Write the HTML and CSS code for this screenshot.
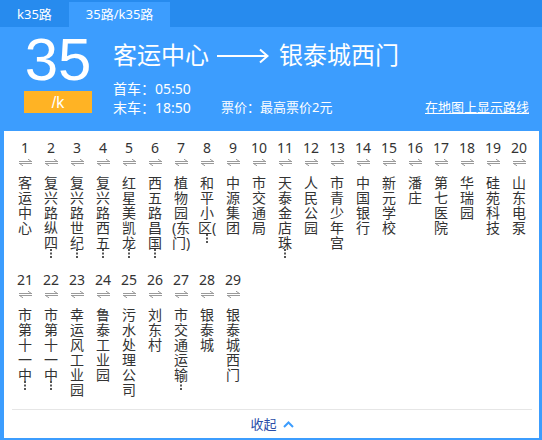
FILE: index.html
```html
<!DOCTYPE html>
<html lang="zh-CN">
<head>
<meta charset="utf-8">
<title>35路/k35路</title>
<link rel="stylesheet" href="styles.css">
</head>
<body>
<div class="tabs">
  <div class="tab">k35路</div>
  <div class="tab active">35路/k35路</div>
</div>
<div class="header">
  <div class="badge">
    <div class="num">35</div>
    <div class="sub">/k</div>
  </div>
  <div class="info">
    <div class="title">
      <span>客运中心</span>
      <svg class="arrow" width="52" height="16" viewBox="0 0 52 16"><path d="M0 8H50" stroke="#fff" stroke-width="2" fill="none"/><path d="M43 1.5L50.5 8L43 14.5" stroke="#fff" stroke-width="2" fill="none"/></svg>
      <span>银泰城西门</span>
    </div>
    <div class="meta">
      <div class="times">
        <div>首车<span class="colon">：</span>05:50</div>
        <div>末车<span class="colon">：</span>18:50</div>
      </div>
      <div class="price">票价<span class="colon">：</span>最高票价2元</div>
      <a class="maplink" href="#">在地图上显示路线</a>
    </div>
  </div>
</div>
<div class="panel">
  <div class="stops">
    <div class="stop"><div class="no">1</div><svg class="swap" viewBox="0 0 13 7"><path d="M0 2.5H13M12.5 2.5L9 0.2M0 4.5H13M0.5 4.5L4 6.8" stroke="#9a9a9a" stroke-width="1" fill="none"/></svg><div class="name">客运中心</div></div>
    <div class="stop"><div class="no">2</div><svg class="swap" viewBox="0 0 13 7"><path d="M0 2.5H13M12.5 2.5L9 0.2M0 4.5H13M0.5 4.5L4 6.8" stroke="#9a9a9a" stroke-width="1" fill="none"/></svg><div class="name">复兴路纵四</div><div class="more"></div></div>
    <div class="stop"><div class="no">3</div><svg class="swap" viewBox="0 0 13 7"><path d="M0 2.5H13M12.5 2.5L9 0.2M0 4.5H13M0.5 4.5L4 6.8" stroke="#9a9a9a" stroke-width="1" fill="none"/></svg><div class="name">复兴路世纪</div><div class="more"></div></div>
    <div class="stop"><div class="no">4</div><svg class="swap" viewBox="0 0 13 7"><path d="M0 2.5H13M12.5 2.5L9 0.2M0 4.5H13M0.5 4.5L4 6.8" stroke="#9a9a9a" stroke-width="1" fill="none"/></svg><div class="name">复兴路西五</div><div class="more"></div></div>
    <div class="stop"><div class="no">5</div><svg class="swap" viewBox="0 0 13 7"><path d="M0 2.5H13M12.5 2.5L9 0.2M0 4.5H13M0.5 4.5L4 6.8" stroke="#9a9a9a" stroke-width="1" fill="none"/></svg><div class="name">红星美凯龙</div><div class="more"></div></div>
    <div class="stop"><div class="no">6</div><svg class="swap" viewBox="0 0 13 7"><path d="M0 2.5H13M12.5 2.5L9 0.2M0 4.5H13M0.5 4.5L4 6.8" stroke="#9a9a9a" stroke-width="1" fill="none"/></svg><div class="name">西五路昌国</div><div class="more"></div></div>
    <div class="stop"><div class="no">7</div><svg class="swap" viewBox="0 0 13 7"><path d="M0 2.5H13M12.5 2.5L9 0.2M0 4.5H13M0.5 4.5L4 6.8" stroke="#9a9a9a" stroke-width="1" fill="none"/></svg><div class="name">植物园(东门)</div></div>
    <div class="stop"><div class="no">8</div><svg class="swap" viewBox="0 0 13 7"><path d="M0 2.5H13M12.5 2.5L9 0.2M0 4.5H13M0.5 4.5L4 6.8" stroke="#9a9a9a" stroke-width="1" fill="none"/></svg><div class="name">和平小区(</div><div class="more"></div></div>
    <div class="stop"><div class="no">9</div><svg class="swap" viewBox="0 0 13 7"><path d="M0 2.5H13M12.5 2.5L9 0.2M0 4.5H13M0.5 4.5L4 6.8" stroke="#9a9a9a" stroke-width="1" fill="none"/></svg><div class="name">中源集团</div></div>
    <div class="stop"><div class="no">10</div><svg class="swap" viewBox="0 0 13 7"><path d="M0 2.5H13M12.5 2.5L9 0.2M0 4.5H13M0.5 4.5L4 6.8" stroke="#9a9a9a" stroke-width="1" fill="none"/></svg><div class="name">市交通局</div></div>
    <div class="stop"><div class="no">11</div><svg class="swap" viewBox="0 0 13 7"><path d="M0 2.5H13M12.5 2.5L9 0.2M0 4.5H13M0.5 4.5L4 6.8" stroke="#9a9a9a" stroke-width="1" fill="none"/></svg><div class="name">天泰金店珠</div><div class="more"></div></div>
    <div class="stop"><div class="no">12</div><svg class="swap" viewBox="0 0 13 7"><path d="M0 2.5H13M12.5 2.5L9 0.2M0 4.5H13M0.5 4.5L4 6.8" stroke="#9a9a9a" stroke-width="1" fill="none"/></svg><div class="name">人民公园</div></div>
    <div class="stop"><div class="no">13</div><svg class="swap" viewBox="0 0 13 7"><path d="M0 2.5H13M12.5 2.5L9 0.2M0 4.5H13M0.5 4.5L4 6.8" stroke="#9a9a9a" stroke-width="1" fill="none"/></svg><div class="name">市青少年宫</div></div>
    <div class="stop"><div class="no">14</div><svg class="swap" viewBox="0 0 13 7"><path d="M0 2.5H13M12.5 2.5L9 0.2M0 4.5H13M0.5 4.5L4 6.8" stroke="#9a9a9a" stroke-width="1" fill="none"/></svg><div class="name">中国银行</div></div>
    <div class="stop"><div class="no">15</div><svg class="swap" viewBox="0 0 13 7"><path d="M0 2.5H13M12.5 2.5L9 0.2M0 4.5H13M0.5 4.5L4 6.8" stroke="#9a9a9a" stroke-width="1" fill="none"/></svg><div class="name">新元学校</div></div>
    <div class="stop"><div class="no">16</div><svg class="swap" viewBox="0 0 13 7"><path d="M0 2.5H13M12.5 2.5L9 0.2M0 4.5H13M0.5 4.5L4 6.8" stroke="#9a9a9a" stroke-width="1" fill="none"/></svg><div class="name">潘庄</div></div>
    <div class="stop"><div class="no">17</div><svg class="swap" viewBox="0 0 13 7"><path d="M0 2.5H13M12.5 2.5L9 0.2M0 4.5H13M0.5 4.5L4 6.8" stroke="#9a9a9a" stroke-width="1" fill="none"/></svg><div class="name">第七医院</div></div>
    <div class="stop"><div class="no">18</div><svg class="swap" viewBox="0 0 13 7"><path d="M0 2.5H13M12.5 2.5L9 0.2M0 4.5H13M0.5 4.5L4 6.8" stroke="#9a9a9a" stroke-width="1" fill="none"/></svg><div class="name">华瑞园</div></div>
    <div class="stop"><div class="no">19</div><svg class="swap" viewBox="0 0 13 7"><path d="M0 2.5H13M12.5 2.5L9 0.2M0 4.5H13M0.5 4.5L4 6.8" stroke="#9a9a9a" stroke-width="1" fill="none"/></svg><div class="name">硅苑科技</div></div>
    <div class="stop"><div class="no">20</div><svg class="swap" viewBox="0 0 13 7"><path d="M0 2.5H13M12.5 2.5L9 0.2M0 4.5H13M0.5 4.5L4 6.8" stroke="#9a9a9a" stroke-width="1" fill="none"/></svg><div class="name">山东电泵</div></div>
    <div class="stop"><div class="no">21</div><svg class="swap" viewBox="0 0 13 7"><path d="M0 2.5H13M12.5 2.5L9 0.2M0 4.5H13M0.5 4.5L4 6.8" stroke="#9a9a9a" stroke-width="1" fill="none"/></svg><div class="name">市第十一中</div><div class="more"></div></div>
    <div class="stop"><div class="no">22</div><svg class="swap" viewBox="0 0 13 7"><path d="M0 2.5H13M12.5 2.5L9 0.2M0 4.5H13M0.5 4.5L4 6.8" stroke="#9a9a9a" stroke-width="1" fill="none"/></svg><div class="name">市第十一中</div><div class="more"></div></div>
    <div class="stop"><div class="no">23</div><svg class="swap" viewBox="0 0 13 7"><path d="M0 2.5H13M12.5 2.5L9 0.2M0 4.5H13M0.5 4.5L4 6.8" stroke="#9a9a9a" stroke-width="1" fill="none"/></svg><div class="name">幸运风工业园</div></div>
    <div class="stop"><div class="no">24</div><svg class="swap" viewBox="0 0 13 7"><path d="M0 2.5H13M12.5 2.5L9 0.2M0 4.5H13M0.5 4.5L4 6.8" stroke="#9a9a9a" stroke-width="1" fill="none"/></svg><div class="name">鲁泰工业园</div></div>
    <div class="stop"><div class="no">25</div><svg class="swap" viewBox="0 0 13 7"><path d="M0 2.5H13M12.5 2.5L9 0.2M0 4.5H13M0.5 4.5L4 6.8" stroke="#9a9a9a" stroke-width="1" fill="none"/></svg><div class="name">污水处理公司</div></div>
    <div class="stop"><div class="no">26</div><svg class="swap" viewBox="0 0 13 7"><path d="M0 2.5H13M12.5 2.5L9 0.2M0 4.5H13M0.5 4.5L4 6.8" stroke="#9a9a9a" stroke-width="1" fill="none"/></svg><div class="name">刘东村</div></div>
    <div class="stop"><div class="no">27</div><svg class="swap" viewBox="0 0 13 7"><path d="M0 2.5H13M12.5 2.5L9 0.2M0 4.5H13M0.5 4.5L4 6.8" stroke="#9a9a9a" stroke-width="1" fill="none"/></svg><div class="name">市交通运输</div><div class="more"></div></div>
    <div class="stop"><div class="no">28</div><svg class="swap" viewBox="0 0 13 7"><path d="M0 2.5H13M12.5 2.5L9 0.2M0 4.5H13M0.5 4.5L4 6.8" stroke="#9a9a9a" stroke-width="1" fill="none"/></svg><div class="name">银泰城</div></div>
    <div class="stop"><div class="no">29</div><svg class="swap" viewBox="0 0 13 7"><path d="M0 2.5H13M12.5 2.5L9 0.2M0 4.5H13M0.5 4.5L4 6.8" stroke="#9a9a9a" stroke-width="1" fill="none"/></svg><div class="name">银泰城西门</div></div>
  </div>
  <div class="footer">
    <span class="collapse">收起</span>
    <svg class="chev" width="11" height="7" viewBox="0 0 11 7"><path d="M1 6L5.5 1.5L10 6" stroke="#3c9dfe" stroke-width="2" fill="none"/></svg>
  </div>
</div>
</body>
</html>
```

FILE: styles.css
```css
html, body {
  margin: 0;
  padding: 0;
  background: #fff;
}
body {
  width: 542px;
  height: 440px;
  font-family: "Noto Sans", "Noto Sans CJK SC", sans-serif;
  color: #333;
  overflow: hidden;
}
.tabs {
  display: flex;
  height: 27px;
  background: #278bee;
}
.tab {
  margin-top: 2px;
  height: 25px;
  line-height: 25px;
  padding: 0 17px;
  font-size: 13px;
  color: #fff;
}
.tab.active {
  background: #3c9dfe;
}
.header {
  display: flex;
  height: 104px;
  background: #3c9dfe;
  padding: 0 13px 0 24px;
  color: #fff;
}
.badge {
  width: 68px;
  display: flex;
  flex-direction: column;
}
.num {
  font-family: "Liberation Sans", Arial, sans-serif;
  font-size: 60px;
  line-height: 62px;
  height: 62px;
  padding-top: 2px;
  text-align: center;
}
.sub {
  height: 21px;
  padding-top: 1px;
  line-height: 21px;
  background: #ffb324;
  text-align: center;
  font-family: "Liberation Sans", Arial, sans-serif;
  font-size: 16px;
}
.info {
  flex: 1;
  margin-left: 21px;
  display: flex;
  flex-direction: column;
}
.title {
  margin-top: 12px;
  height: 32px;
  line-height: 32px;
  font-size: 24px;
  display: flex;
  align-items: center;
  white-space: nowrap;
}
.arrow {
  margin: 1px 10px 0 8px;
}
.meta {
  margin-top: 8px;
  display: flex;
  align-items: flex-end;
}
.times {
  width: 108px;
  font-size: 14px;
  line-height: 19px;
}
.colon {
  font-family: "Noto Sans CJK TC", "Noto Sans CJK SC", sans-serif;
}
.price {
  flex: 1;
  font-size: 13px;
  line-height: 19px;
}
.maplink {
  font-size: 13px;
  line-height: 19px;
  color: #fff;
  text-decoration: underline;
}
.panel {
  height: 307px;
  border-left: 4px solid #3c9dfe;
  border-right: 3px solid #3c9dfe;
  border-bottom: 2px solid #3c9dfe;
  padding: 0 7px 0 8px;
}
.stops {
  display: grid;
  grid-template-columns: repeat(20, 26px);
  row-gap: 7px;
  padding-top: 9px;
}
.stop {
  height: 125px;
  display: flex;
  flex-direction: column;
  align-items: center;
}
.no {
  font-size: 14px;
  line-height: 16px;
  height: 16px;
  color: #333;
}
.swap {
  width: 13px;
  height: 7px;
  margin-top: 3px;
}
.name {
  width: 20px;
  margin-top: 9px;
  font-size: 14px;
  line-height: 15px;
  text-align: center;
  color: #333;
  word-break: break-all;
}
.more {
  width: 2px;
  height: 10px;
  margin-top: -1px;
}
.more::before {
  content: "";
  display: block;
  width: 1.5px;
  height: 1.5px;
  background: #555;
  box-shadow: 0 3.5px #555, 0 7px #555;
}
.footer {
  margin-top: 12px;
  border-top: 1px solid #e6e6e6;
  height: 28px;
  display: flex;
  align-items: center;
  justify-content: center;
  gap: 6px;
}
.collapse {
  font-size: 13px;
  color: #2a4ca8;
  line-height: 28px;
}
.chev {
  margin-top: 1px;
}
```
